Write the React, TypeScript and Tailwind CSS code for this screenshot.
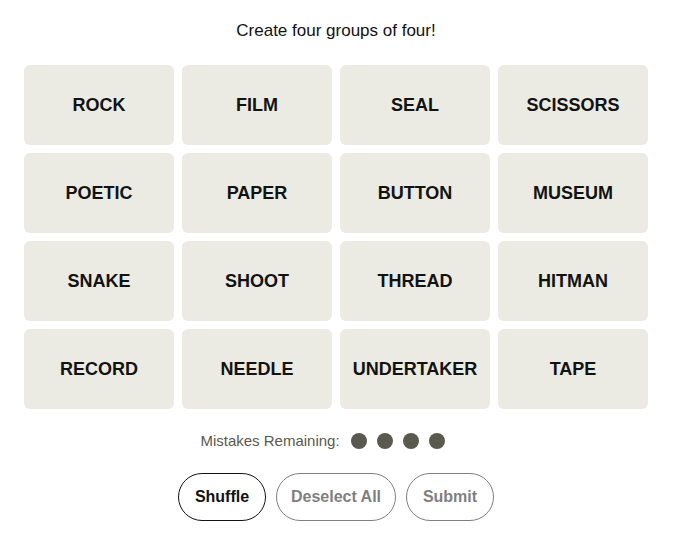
const words = [
  'ROCK', 'FILM', 'SEAL', 'SCISSORS',
  'POETIC', 'PAPER', 'BUTTON', 'MUSEUM',
  'SNAKE', 'SHOOT', 'THREAD', 'HITMAN',
  'RECORD', 'NEEDLE', 'UNDERTAKER', 'TAPE',
];

function Tile({ word }: { word: string }) {
  return (
    <button className="flex h-20 items-center justify-center rounded-md bg-[#ebebe3] text-[18px] font-bold text-[#121212]">
      {word}
    </button>
  );
}

export default function App() {
  return (
    <div
      className="min-h-[550px] w-[672px] bg-white px-6 pt-[20px]"
      style={{ fontFamily: '"Liberation Sans", Arial, sans-serif' }}
    >
      <p className="text-center text-[17px] leading-[22px] text-[#121212]">
        Create four groups of four!
      </p>
      <div className="mt-[23px] grid grid-cols-4 gap-2">
        {words.map((w) => (
          <Tile key={w} word={w} />
        ))}
      </div>
      <div className="mt-[21px] flex items-center justify-center pr-[27px]">
        <span className="text-[15px] text-[#5a594e]">Mistakes Remaining:</span>
        <div className="ml-[11px] flex gap-[10px]">
          {[0, 1, 2, 3].map((i) => (
            <span key={i} className="h-4 w-4 rounded-full bg-[#5a594e]" />
          ))}
        </div>
      </div>
      <div className="mt-[20px] flex justify-center gap-[10px]">
        <button className="h-12 w-[88px] rounded-full border border-[#121212] text-[16px] font-semibold text-[#121212]">
          Shuffle
        </button>
        <button className="h-12 w-[120px] rounded-full border border-[#7f7f7f] text-[16px] font-semibold text-[#7f7f7f]">
          Deselect All
        </button>
        <button className="h-12 w-[88px] rounded-full border border-[#7f7f7f] text-[16px] font-semibold text-[#7f7f7f]">
          Submit
        </button>
      </div>
    </div>
  );
}
